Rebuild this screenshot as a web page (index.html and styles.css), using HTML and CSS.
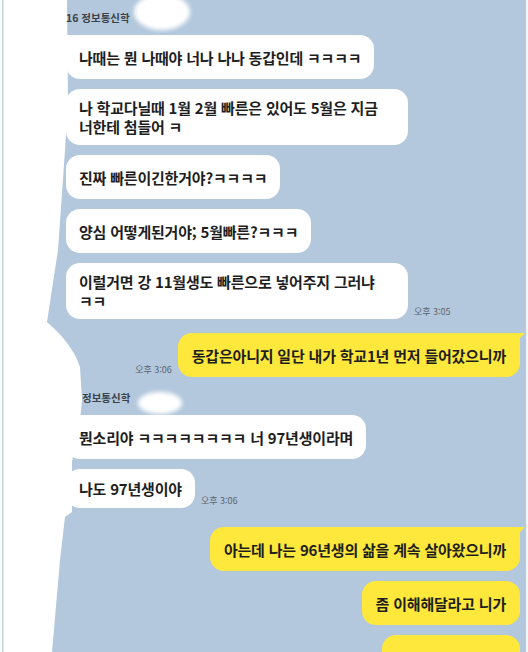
FILE: index.html
```html
<!DOCTYPE html>
<html lang="ko">
<head>
  <meta charset="UTF-8" />
  <meta name="viewport" content="width=device-width, initial-scale=1.0" />
  <title>채팅</title>
  <link rel="stylesheet" href="styles.css">
</head>
<body>
  <div class="screen">
    <!-- 왼쪽 하얀 영역 (프로필 가림) -->
    <svg class="wall" width="528" height="652" viewBox="0 0 528 652">
      <path d="M0,0 L67,0 L68,100 L65,150 L58,250 L47,322 C60,333 75,350 80,367 L82,400 L80,420 L72,462 L72,512 L65,517 L60,560 L52,652 L0,652 Z" fill="#fff"/>
      <rect x="2" y="0" width="1.5" height="652" fill="#c6d4dc"/>
      <rect x="526" y="0" width="2" height="652" fill="#f4f6f8"/>
    </svg>

    <div class="chat">
      <div class="name">16 정보통신학</div>
      <div class="row in"><div class="bubble tail">나때는 뭔 나때야 너나 나나 동갑인데 ㅋㅋㅋㅋ</div></div>
      <div class="row in"><div class="bubble wide">나 학교다닐때 1월 2월 빠른은 있어도 5월은 지금<br>너한테 첨들어 ㅋ</div></div>
      <div class="row in"><div class="bubble">진짜 빠른이긴한거야?ㅋㅋㅋㅋ</div></div>
      <div class="row in"><div class="bubble">양심 어떻게된거야; 5월빠른?ㅋㅋㅋ</div></div>
      <div class="row in">
        <div class="bubble wide">이럴거면 강 11월생도 빠른으로 넣어주지 그러냐<br>ㅋㅋ</div>
        <span class="time">오후 3:05</span>
      </div>

      <div class="row out push-lg">
        <span class="time">오후 3:06</span>
        <div class="bubble tail">동갑은아니지 일단 내가 학교1년 먼저 들어갔으니까</div>
      </div>

      <div class="name indent push-sm">정보통신학</div>
      <div class="row in"><div class="bubble tail">뭔소리야 ㅋㅋㅋㅋㅋㅋㅋㅋ 너 97년생이라며</div></div>
      <div class="row in">
        <div class="bubble short">나도 97년생이야</div>
        <span class="time">오후 3:06</span>
      </div>

      <div class="row out push-md">
        <div class="bubble tail">아는데 나는 96년생의 삶을 계속 살아왔으니까</div>
      </div>
      <div class="row out"><div class="bubble">좀 이해해달라고 니가</div></div>
      <div class="row out"><div class="bubble last"></div></div>
    </div>

    <!-- 이름 가림 -->
    <div class="blot blot-top"></div>
    <div class="blot blot-mid"></div>
  </div>
</body>
</html>
```

FILE: styles.css
```css
body {
  margin: 0;
  font-family: "Noto Sans CJK KR", "Noto Sans", sans-serif;
  background: #fff;
}

.screen {
  position: relative;
  width: 528px;
  height: 652px;
  overflow: hidden;
  background: #b3c8dc;
}

.wall {
  position: absolute;
  left: 0;
  top: 0;
  z-index: 0;
}

.chat {
  position: relative;
  z-index: 1;
  display: flex;
  flex-direction: column;
  gap: 10px;
  padding: 11px 8px 0 66px;
}

.name {
  font-size: 10.5px;
  line-height: 14px;
  font-weight: 700;
  color: #3b4148;
}

.name.indent {
  padding-left: 16px;
}

.row {
  display: flex;
  align-items: flex-end;
  gap: 6px;
}

.row.out {
  justify-content: flex-end;
}

.push-sm {
  margin-top: 4px;
}

.push-md {
  margin-top: 9px;
}

.push-lg {
  margin-top: 4px;
}

.bubble {
  position: relative;
  box-sizing: border-box;
  min-height: 44px;
  display: flex;
  align-items: center;
  padding: 9px 13px;
  border-radius: 14px;
  background: #fff;
  color: #1e1e1e;
  font-size: 15px;
  line-height: 19px;
  font-weight: 700;
  letter-spacing: -0.2px;
}

.bubble.wide {
  display: block;
  width: 342px;
}

.bubble.short {
  min-height: 39px;
}

.bubble.last {
  width: 138px;
}

.out .bubble {
  background: #fde83b;
  padding-left: 14px;
  padding-right: 14px;
}

.in .tail {
  border-top-left-radius: 4px;
}

.in .tail::before {
  content: "";
  position: absolute;
  left: -6px;
  top: 0;
  border-top: 9px solid #fff;
  border-left: 9px solid transparent;
}

.out .tail {
  border-top-right-radius: 4px;
}

.out .tail::before {
  content: "";
  position: absolute;
  right: -5px;
  top: 0;
  border-top: 8px solid #fde83b;
  border-right: 8px solid transparent;
}

.time {
  font-size: 9px;
  line-height: 12px;
  color: #5a6470;
  padding-bottom: 1px;
  white-space: nowrap;
}

.blot {
  position: absolute;
  z-index: 2;
  background: #fff;
  border-radius: 50%;
  filter: blur(2px);
}

.blot-top {
  left: 134px;
  top: -6px;
  width: 56px;
  height: 36px;
}

.blot-mid {
  left: 138px;
  top: 392px;
  width: 44px;
  height: 22px;
}
```
